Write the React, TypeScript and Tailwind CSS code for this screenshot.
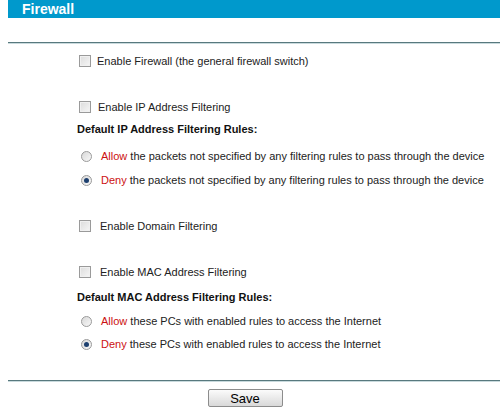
import React from "react";

const font = { fontFamily: '"Liberation Sans", Arial, sans-serif' };

function Check() {
  return (
    <span className="inline-block w-[12px] h-[12px] border border-[#9a9a9a] bg-gradient-to-br from-[#dcdcdc] to-[#f6f6f6] shadow-[inset_0_0_0_1px_#f0f0f0]" />
  );
}

function Radio({ checked }: { checked?: boolean }) {
  return (
    <span className="inline-flex items-center justify-center w-[11px] h-[11px] rounded-full border border-[#9a9a9a] bg-gradient-to-br from-[#d8d8d8] to-[#f8f8f8]">
      {checked && <span className="block w-[5px] h-[5px] rounded-full bg-[#1c3f6e]" />}
    </span>
  );
}

export default function App() {
  return (
    <div className="w-[500px] h-[411px] bg-white flex flex-col text-[11px] text-[#222]" style={font}>
      <div className="ml-[8px] h-[18px] bg-[#0099cc] flex items-center pl-[14px]">
        <span className="text-white font-bold text-[14px] leading-none">Firewall</span>
      </div>
      <div className="ml-[8px] mt-[24px] h-[1px] bg-[#58797e]" />
      <div className="ml-[8px] h-[1px] bg-[#c9dadd]" />

      <div className="mt-[6px] h-[22px] flex items-center pl-[79px] gap-[6px]">
        <Check />
        <span>Enable Firewall (the general firewall switch)</span>
      </div>

      <div className="mt-[24px] h-[22px] flex items-center pl-[79px] gap-[7px]">
        <Check />
        <span>Enable IP Address Filtering</span>
      </div>
      <div className="h-[22px] flex items-center pl-[77px] font-bold text-[#111]">
        Default IP Address Filtering Rules:
      </div>
      <div className="mt-[5px] h-[22px] flex items-center pl-[81px] gap-[9px]">
        <Radio />
        <span>
          <span className="text-[#cc1111]">Allow</span> the packets not specified by any filtering rules to pass through the device
        </span>
      </div>
      <div className="mt-[2px] h-[22px] flex items-center pl-[81px] gap-[9px]">
        <Radio checked />
        <span>
          <span className="text-[#cc1111]">Deny</span> the packets not specified by any filtering rules to pass through the device
        </span>
      </div>

      <div className="mt-[24px] h-[22px] flex items-center pl-[79px] gap-[9px]">
        <Check />
        <span>Enable Domain Filtering</span>
      </div>

      <div className="mt-[24px] h-[22px] flex items-center pl-[79px] gap-[9px]">
        <Check />
        <span>Enable MAC Address Filtering</span>
      </div>
      <div className="mt-[3px] h-[22px] flex items-center pl-[77px] font-bold text-[#111]">
        Default MAC Address Filtering Rules:
      </div>
      <div className="mt-[2px] h-[22px] flex items-center pl-[81px] gap-[9px]">
        <Radio />
        <span>
          <span className="text-[#cc1111]">Allow</span> these PCs with enabled rules to access the Internet
        </span>
      </div>
      <div className="mt-[1px] h-[22px] flex items-center pl-[81px] gap-[9px]">
        <Radio checked />
        <span>
          <span className="text-[#cc1111]">Deny</span> these PCs with enabled rules to access the Internet
        </span>
      </div>

      <div className="ml-[8px] mt-[25px] h-[1px] bg-[#58797e]" />
      <div className="ml-[8px] h-[1px] bg-[#c9dadd]" />

      <div className="mt-[7px] flex justify-center pl-[-10px]">
        <button className="ml-[-10px] w-[75px] h-[18px] border border-[#8c8c8c] rounded-[2px] bg-gradient-to-b from-[#fbfbfb] to-[#d9d9d9] text-[13px] leading-none text-black flex items-center justify-center" style={font}>
          Save
        </button>
      </div>
    </div>
  );
}
